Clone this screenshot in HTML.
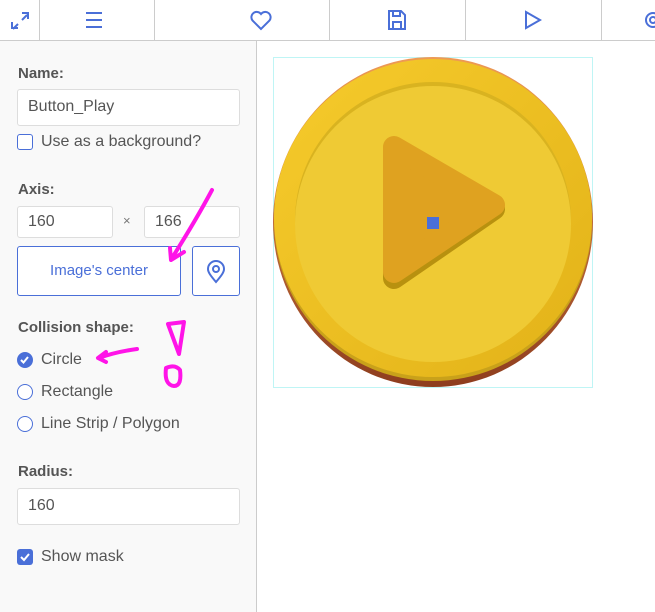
<!DOCTYPE html>
<html><head><style>
*{box-sizing:border-box;margin:0;padding:0}
body{width:655px;height:612px;overflow:hidden;background:#fff;font-family:"Liberation Sans",sans-serif;position:relative;color:#444}
.tb{position:absolute;left:0;top:0;width:655px;height:41px;border-bottom:1px solid #ccc;background:#fff}
.dv{position:absolute;top:0;height:40px;width:1px;background:#ccc}
.ic{position:absolute;top:8px}
.panel{position:absolute;left:0;top:41px;width:257px;height:571px;background:#f9f9f9;border-right:1px solid #ccc}
.lbl{position:absolute;left:18px;font-size:15px;color:#555;font-weight:bold}
.inp{position:absolute;background:#fff;border:1px solid #ddd;border-radius:3px;font-size:16px;color:#555;padding-left:10px;line-height:34px}
.t{position:absolute;font-size:16px;color:#555}
.btn{position:absolute;border:1px solid #4a6fd8;border-radius:3px;background:#fff;color:#4a6fd8;font-size:15px;text-align:center}
.rad{position:absolute;left:17px;width:16px;height:16px;border:1.5px solid #4a6fd8;border-radius:50%;background:#fff}
</style></head><body>
<div class="tb">
<div class="dv" style="left:39px"></div><div class="dv" style="left:154px"></div><div class="dv" style="left:329px"></div><div class="dv" style="left:465px"></div><div class="dv" style="left:601px"></div>
<svg class="ic" style="left:10px" width="20" height="24" viewBox="0 0 20 24" fill="none" stroke="#4a6fd8" stroke-width="2"><path d="M3 21L8 16M12 12L17 7M12 5h6v6M2 14v6h6"/></svg>
<svg class="ic" style="left:84px" width="20" height="24" viewBox="0 0 20 24" stroke="#4a6fd8" stroke-width="2"><path d="M2 5h16M2 12h16M2 19h16"/></svg>
<svg class="ic" style="left:249px" width="24" height="24" viewBox="0 0 24 24" fill="none" stroke="#4a6fd8" stroke-width="2"><path d="M12 21L3.5 12.5A5 5 0 0 1 12 6a5 5 0 0 1 8.5 6.5z"/></svg>
<svg class="ic" style="left:386px" width="22" height="24" viewBox="0 0 22 24" fill="none" stroke="#4a6fd8" stroke-width="2"><path d="M3 3h12l4 4v14H3z M7 3v5h7V3 M7 21v-7h8v7"/></svg>
<svg class="ic" style="left:522px" width="20" height="24" viewBox="0 0 20 24" fill="none" stroke="#4a6fd8" stroke-width="2"><path d="M4 4l14 8-14 8z"/></svg>
<svg class="ic" style="left:641px" width="24" height="24" viewBox="0 0 24 24" fill="none" stroke="#4a6fd8" stroke-width="2"><circle cx="12" cy="12" r="7"/><circle cx="12" cy="12" r="3"/></svg>
</div>
<div class="panel">
<div class="lbl" style="top:24px">Name:</div>
<div class="inp" style="left:17px;top:48px;width:223px;height:37px">Button_Play</div>
<div style="position:absolute;left:17px;top:93px;width:16px;height:16px;border:1.5px solid #4a6fd8;border-radius:3px;background:#fff"></div>
<div class="t" style="left:41px;top:92px">Use as a background?</div>
<div class="lbl" style="top:140px">Axis:</div>
<div class="inp" style="left:17px;top:165px;width:96px;height:32px;line-height:30px">160</div>
<div class="t" style="left:123px;top:172px;font-size:13px;color:#777">×</div>
<div class="inp" style="left:144px;top:165px;width:96px;height:32px;line-height:30px">166</div>
<div class="btn" style="left:17px;top:205px;width:164px;height:50px;line-height:48px">Image's center</div>
<div class="btn" style="left:192px;top:205px;width:48px;height:50px"><svg style="margin-top:13px" width="20" height="24" viewBox="0 0 20 24" fill="none" stroke="#4a6fd8" stroke-width="2"><path d="M10 22C4 15 2 12 2 9a8 8 0 0 1 16 0c0 3-2 6-8 13z"/><circle cx="10" cy="9" r="3"/></svg></div>
<div class="lbl" style="top:278px">Collision shape:</div>
<div class="rad" style="top:311px;background:#4a6fd8"><svg width="13" height="13" viewBox="0 0 13 13" style="position:absolute;left:0;top:0" fill="none" stroke="#fff" stroke-width="2"><path d="M3 7l2.5 2.5L10 4"/></svg></div>
<div class="t" style="left:41px;top:310px">Circle</div>
<div class="rad" style="top:343px"></div>
<div class="t" style="left:41px;top:342px">Rectangle</div>
<div class="rad" style="top:375px"></div>
<div class="t" style="left:41px;top:374px">Line Strip / Polygon</div>
<div class="lbl" style="top:422px">Radius:</div>
<div class="inp" style="left:17px;top:447px;width:223px;height:37px">160</div>
<div style="position:absolute;left:17px;top:508px;width:16px;height:16px;border-radius:3px;background:#4a6fd8"><svg width="16" height="16" viewBox="0 0 16 16" fill="none" stroke="#fff" stroke-width="2"><path d="M4 8l3 3 5-6"/></svg></div>
<div class="t" style="left:41px;top:507px">Show mask</div>
</div>
<div style="position:absolute;left:273px;top:57px;width:320px;height:331px;border:1px solid #bff5f5"></div>
<svg style="position:absolute;left:273px;top:57px" width="320" height="331" viewBox="0 0 320 331">
<defs>
<linearGradient id="r" x1="0" y1="0" x2="0" y2="1"><stop offset="0" stop-color="#ee9a55"/><stop offset="1" stop-color="#8e3d1e"/></linearGradient>
<linearGradient id="g" x1="0" y1="0" x2="1" y2="1"><stop offset="0" stop-color="#f6cb2c"/><stop offset="1" stop-color="#e2b218"/></linearGradient>
</defs>
<ellipse cx="160" cy="165" rx="160" ry="165" fill="url(#r)"/>
<ellipse cx="160" cy="164" rx="159" ry="160" fill="#c9a11a"/>
<circle cx="160" cy="161" r="159" fill="url(#g)"/>
<circle cx="160" cy="163" r="138" fill="#d9b320"/>
<circle cx="160" cy="167" r="138" fill="#efca34"/>
<polygon points="121,94 221,152 121,221" fill="#b8910f" stroke="#b8910f" stroke-width="22" stroke-linejoin="round"/>
<polygon points="121,90 221,148 121,215" fill="#dfa220" stroke="#dfa220" stroke-width="22" stroke-linejoin="round"/>
<rect x="154" y="160" width="12" height="12" fill="#4a6fd8"/>
</svg>
<svg style="position:absolute;left:0;top:0" width="655" height="612" fill="none" stroke="#ff14e8" stroke-width="4" stroke-linecap="round" stroke-linejoin="round">
<path d="M212 190 Q196 220 172 258"/><path d="M170 248 L171 260 L184 252"/>
<path d="M137 349 Q115 352 99 358"/><path d="M106 352 L98 358 L106 362"/>
<path d="M168 324 L184 322 L179 354 Z"/><path d="M166 368 Q164 385 174 386 Q182 386 180 370 Q175 364 166 368Z"/>
</svg>
</body></html>
